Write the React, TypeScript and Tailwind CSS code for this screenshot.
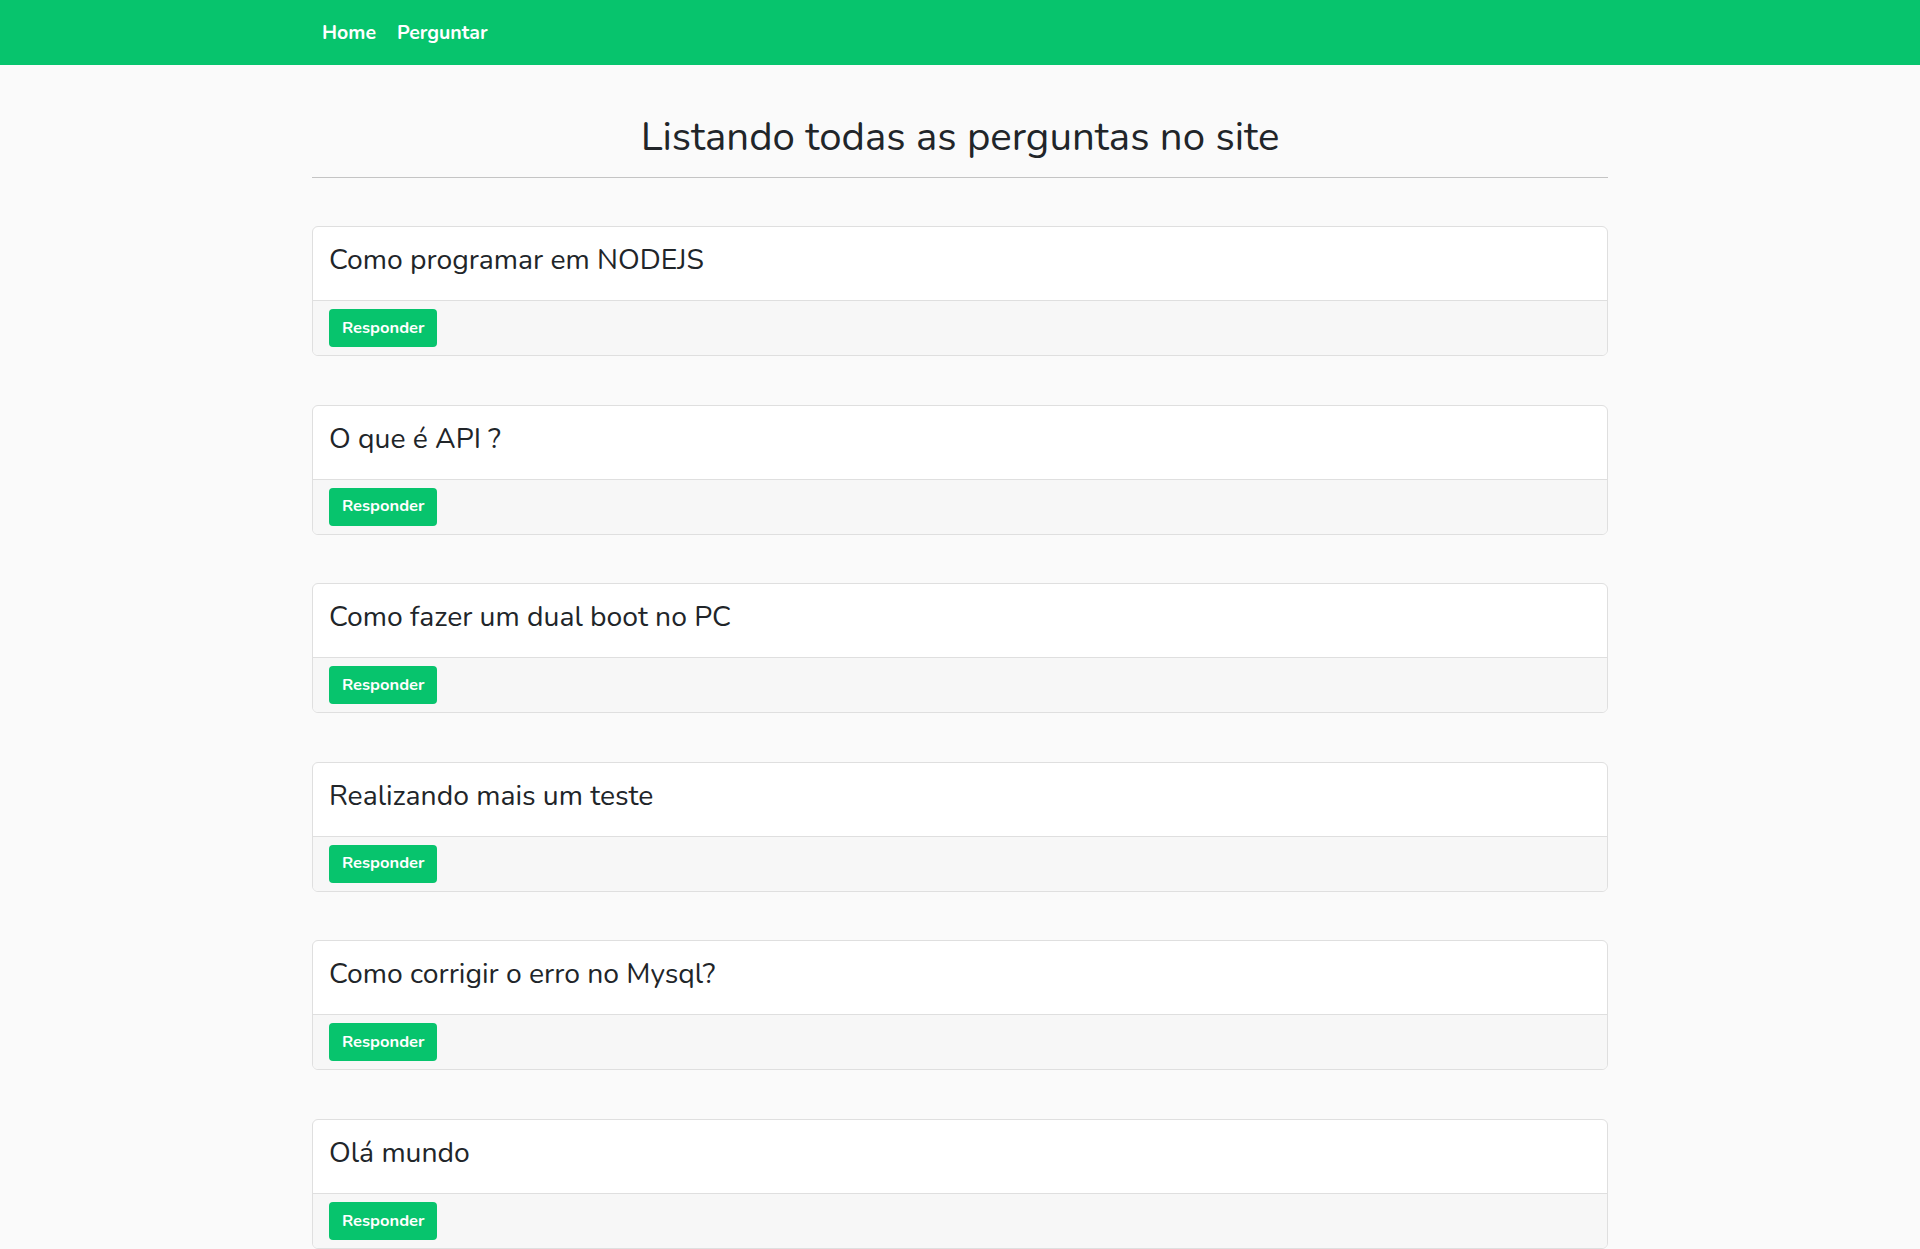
const perguntas = [
  'Como programar em NODEJS',
  'O que é API ?',
  'Como fazer um dual boot no PC',
  'Realizando mais um teste',
  'Como corrigir o erro no Mysql?',
  'Olá mundo',
];

export default function App() {
  return (
    <div className="min-h-screen bg-[#fafafa] text-[#212529] font-['Nunito','Lato','Noto_Sans',sans-serif]">
      {/* Navbar */}
      <nav className="h-[65px] bg-[#07c46d]">
        <div className="mx-auto flex h-full max-w-[1320px] items-center px-[22px]">
          <a href="#" className="mr-[21px] text-[19.5px] font-bold text-white">Home</a>
          <a href="#" className="text-[19.5px] font-bold text-white">Perguntar</a>
        </div>
      </nav>

      <div className="mx-auto max-w-[1320px] px-3">
        <h1 className="mt-[48px] text-center text-[40.2px] leading-[48px] font-normal">
          Listando todas as perguntas no site
        </h1>
        <hr className="mt-[16px] border-t border-[#c4c4c4]" />

        <div className="mt-[48px] flex flex-col gap-[48.6px] pb-12">
          {perguntas.map((titulo) => (
            <div key={titulo} className="overflow-hidden rounded-md border border-[#dfdfdf] bg-white">
              <div className="px-4 pt-4 pb-4">
                <h3 className="mb-2 text-[28.3px] leading-[33px] font-normal">{titulo}</h3>
              </div>
              <div className="border-t border-[#dfdfdf] bg-[#f7f7f7] px-4 py-2">
                <button className="h-[38px] rounded-[4px] bg-[#07c46d] px-[13px] text-[16.5px] font-bold text-white">
                  Responder
                </button>
              </div>
            </div>
          ))}
        </div>
      </div>
    </div>
  );
}
